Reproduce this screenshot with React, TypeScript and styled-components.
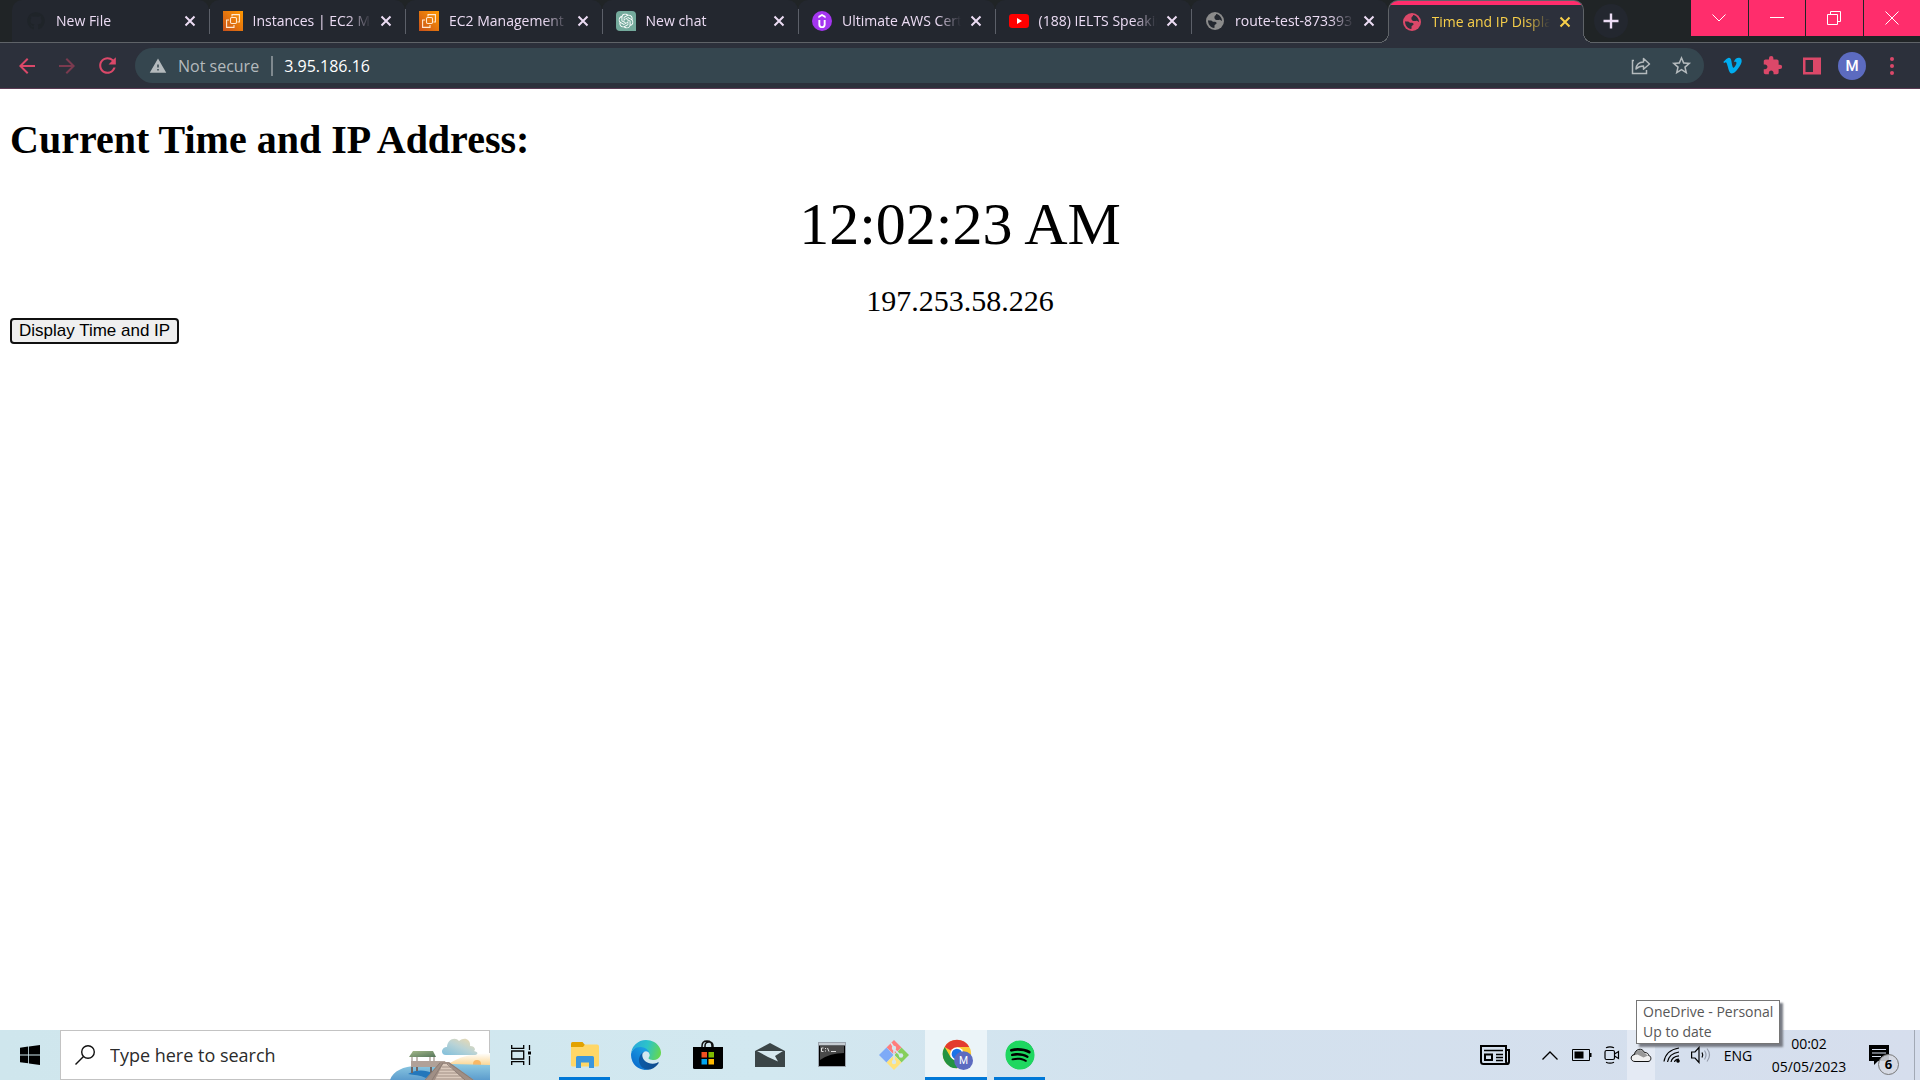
import React from "react";
import styled, { createGlobalStyle, css } from "styled-components";
import { FaGithub, FaSpotify, FaVimeoV } from "react-icons/fa";
import { SiOpenai, SiUdemy } from "react-icons/si";
import {
  MdArrowBack,
  MdArrowForward,
  MdExtension,
  MdRefresh,
  MdStarBorder,
  MdWarning,
} from "react-icons/md";

const c = {
  strip: "#202426",
  tab: "#23272f",
  toolbar: "#2c303b",
  line: "#5f6368",
  omnibox: "#35464f",
  pink: "#ff2d6c",
  accent: "#db4869",
  lavender: "#ecdcf4",
  yellow: "#f8cf4a",
  muted: "#b4babd",
  running: "#0078d7",
};

const uiFont = `"Open Sans", "Noto Sans", sans-serif`;

const GlobalStyle = createGlobalStyle`
  *, *::before, *::after { box-sizing: border-box; }
  body { margin: 0; background: #fff; }
  button, input { font: inherit; color: inherit; }
  svg { display: block; flex: none; }
`;

const Screen = styled.div`
  display: flex;
  flex-direction: column;
  min-height: 100vh;
  font-family: ${uiFont};
`;

const PlainButton = styled.button`
  display: flex;
  align-items: center;
  justify-content: center;
  padding: 0;
  border: 0;
  background: none;
`;

/* ---------- tab strip ---------- */

const TabStrip = styled.header`
  display: flex;
  height: 43px;
  padding-left: 12px;
  background: ${c.strip};
  border-bottom: 1px solid ${c.line};
`;

const TabList = styled.div`
  display: flex;
  flex: 1;
  min-width: 0;
`;

const flare = css`
  content: "";
  position: absolute;
  bottom: 0;
  width: 10px;
  height: 10px;
`;

const Tab = styled.div<{ $active?: boolean }>`
  position: relative;
  display: flex;
  flex: 1 1 0;
  min-width: 0;
  align-items: center;
  padding: 0 9px 0 14px;
  background: ${c.tab};
  border-radius: 10px 10px 0 0;
  color: ${c.lavender};
  font-size: 14px;
  line-height: 20px;

  &:not(:first-child)::before {
    content: "";
    position: absolute;
    left: 0;
    top: 9px;
    width: 1px;
    height: 25px;
    background: #5c6069;
  }

  ${(p) =>
    p.$active &&
    css`
      margin-bottom: -1px;
      padding: 0 8px 0 13px;
      background: linear-gradient(${c.pink} 4px, ${c.toolbar} 4px);
      border: 1px solid ${c.line};
      border-bottom: 0;
      color: ${c.yellow};

      &:not(:first-child)::before {
        ${flare}
        top: auto;
        left: -10px;
        background: radial-gradient(circle at 0 0, ${c.tab} 9px, ${c.line} 9px, ${c.line} 10px, ${c.toolbar} 10px);
      }
      &::after {
        ${flare}
        right: -10px;
        background: radial-gradient(circle at 100% 0, ${c.strip} 9px, ${c.line} 9px, ${c.line} 10px, ${c.toolbar} 10px);
      }
    `}
`;

const Favicon = styled.span`
  display: flex;
  flex: none;
  width: 20px;
  height: 20px;
  align-items: center;
  justify-content: center;
`;

const TabTitle = styled.span`
  flex: 1;
  min-width: 0;
  margin: 0 5px 0 10px;
  overflow: hidden;
  white-space: nowrap;
  mask-image: linear-gradient(to left, transparent, #000 24px);
`;

const TabClose = styled(PlainButton)`
  flex: none;
  width: 20px;
  height: 20px;
`;

const NewTab = styled(PlainButton)`
  width: 34px;
  height: 34px;
  margin: 4px 63px 0 10px;
  border-radius: 50%;
  background: ${c.tab};
`;

const WindowControls = styled.div`
  display: grid;
  grid-template-columns: repeat(4, 1fr);
  gap: 1px;
  width: 229px;
`;

const WindowButton = styled(PlainButton)`
  height: 36px;
  background: ${c.pink};
`;

/* ---------- toolbar ---------- */

const Toolbar = styled.nav`
  display: flex;
  align-items: center;
  height: 46px;
  padding: 0 8px 0 7px;
  background: ${c.toolbar};
  border-bottom: 1px solid #5b3a53;
  color: ${c.accent};
`;

const ToolButton = styled(PlainButton)<{ $dim?: boolean }>`
  width: 40px;
  height: 36px;
  opacity: ${(p) => (p.$dim ? 0.45 : 1)};
`;

const Omnibox = styled.div`
  display: flex;
  flex: 1;
  align-items: center;
  height: 35px;
  margin: 0 8px;
  padding: 0 3px 0 14px;
  border-radius: 18px;
  background: ${c.omnibox};
  color: ${c.muted};
  font-size: 16px;
`;

const Security = styled.label`
  display: flex;
  align-items: center;
  gap: 11px;
  padding-right: 12px;
`;

const Address = styled.input`
  flex: 1;
  min-width: 0;
  height: 20px;
  padding: 0 0 0 11px;
  border: 0;
  border-left: 2px solid #7f898f;
  outline: 0;
  background: none;
  color: #fff;
`;

const Avatar = styled.span`
  display: grid;
  place-items: center;
  width: 28px;
  height: 28px;
  border-radius: 50%;
  background: #5c6bc0;
  color: #fff;
  font: 500 15px Roboto, sans-serif;
`;

/* ---------- page ---------- */

const Page = styled.main`
  flex: 1;
  padding: 28px 10px;
  color: #000;
  font-family: "Liberation Serif", "Times New Roman", serif;
`;

const Heading = styled.h1`
  margin: 0 0 27px;
  font-size: 40px;
  line-height: 46px;
`;

const Time = styled.div`
  margin-bottom: 25px;
  font-size: 60px;
  line-height: 69px;
  text-align: center;
`;

const Ip = styled.div`
  font-size: 30px;
  line-height: 34px;
  text-align: center;
`;

const DisplayButton = styled.button`
  display: block;
  height: 26px;
  padding: 0 7px;
  border: 2px solid #101010;
  border-radius: 4px;
  background: #efefef;
  color: #000;
  font: 17px/20px "Liberation Sans", Arial, sans-serif;
`;

/* ---------- taskbar ---------- */

const Taskbar = styled.footer`
  display: flex;
  height: 50px;
  background: linear-gradient(90deg, #cfe6ed, #d2e8f0 40%, #d3e1ee 62%, #d6deed);
  color: #000;
`;

const StartButton = styled(PlainButton)`
  width: 60px;
`;

const SearchBox = styled.label`
  display: flex;
  align-items: center;
  width: 430px;
  padding-left: 14px;
  border: 1px solid #c3c3c3;
  background: #fff;
  font-size: 18px;
`;

const SearchInput = styled.input`
  flex: 1;
  min-width: 0;
  padding: 0 0 0 15px;
  border: 0;
  outline: 0;
  background: none;
  &::placeholder {
    color: #2b2b2b;
    opacity: 1;
  }
`;

const SearchArt = styled.svg`
  align-self: flex-end;
  margin: 0 -1px -1px 0;
`;

const Apps = styled.div`
  display: flex;
  flex: 1;
`;

const AppButton = styled(PlainButton)<{ $state?: "running" | "focused" }>`
  width: 62px;
  background: ${(p) => (p.$state === "focused" ? "#ebf4f8" : "none")};
  ${(p) =>
    p.$state &&
    css`
      box-shadow: inset 0 -3px ${c.running};
    `}
  ${(p) =>
    p.$state === "running" &&
    css`
      width: 51px;
      margin: 0 5px 0 7px;
    `}
`;

const Tray = styled.div`
  display: flex;
  font-size: 14px;
`;

const TrayButton = styled(PlainButton)<{ $w: number; $hover?: boolean }>`
  position: relative;
  width: ${(p) => p.$w}px;
  background: ${(p) => (p.$hover ? "#e4eaf4" : "none")};
`;

const NoticeButton = styled(PlainButton)`
  position: relative;
  width: 59px;
  padding-right: 11px;
`;

const Clock = styled.div`
  display: flex;
  flex-direction: column;
  justify-content: space-between;
  width: 92px;
  padding: 3px 0 2px;
  text-align: center;
  line-height: 22px;
`;

const Tooltip = styled.div`
  position: absolute;
  left: 9px;
  bottom: 36px;
  padding: 1px 6px;
  border: 1px solid #767676;
  background: #fff;
  box-shadow: 3px 3px 2px #777b84;
  color: #575757;
  font-size: 14px;
  line-height: 20px;
  text-align: left;
  white-space: nowrap;
`;

const Badge = styled.span`
  position: absolute;
  left: 23px;
  top: 24px;
  display: grid;
  place-items: center;
  width: 21px;
  height: 21px;
  border: 1px solid #777;
  border-radius: 50%;
  background: rgba(214, 218, 226, 0.88);
  font-size: 13px;
  font-weight: 700;
  line-height: 13px;
`;

const ShowDesktop = styled(PlainButton)`
  width: 6px;
  border-left: 1px solid #a2a9b5;
`;

/* ---------- drawings ---------- */

const Ec2Icon = () => (
  <svg width="20" height="20" viewBox="0 0 20 20">
    <defs>
      <linearGradient id="ec2" x1="0" y1="1" x2="1" y2="0">
        <stop offset="0" stopColor="#c8511b" />
        <stop offset="1" stopColor="#f90" />
      </linearGradient>
    </defs>
    <rect width="20" height="20" fill="url(#ec2)" />
    <g fill="none" stroke="#ffe9d2" strokeWidth="1.1">
      <rect x="7.5" y="6.5" width="6" height="6" rx="1.2" />
      <path d="M9 5.500V3.600h7.400V11H14.500M6 9H3.600v7.400H11V14" />
    </g>
  </svg>
);

const ChatIcon = () => (
  <svg width="20" height="20" viewBox="0 0 20 20">
    <path d="M4 0h12a4 4 0 0 1 4 4v16H4a4 4 0 0 1-4-4V4a4 4 0 0 1 4-4z" fill="#74aa9c" />
    <SiOpenai x="2.5" y="2.5" size={15} color="#fff" />
  </svg>
);

const UdemyIcon = () => (
  <svg width="20" height="20" viewBox="0 0 20 20">
    <circle cx="10" cy="10" r="10" fill="#a435f0" />
    <SiUdemy x="3" y="3" size={14} color="#fff" />
  </svg>
);

const YoutubeIcon = () => (
  <svg width="20" height="20" viewBox="0 0 20 20">
    <rect y="3" width="20" height="14" rx="3.2" fill="#f00" />
    <path d="M8 7v6l5-3z" fill="#fff" />
  </svg>
);

const GlobeIcon = ({ color, land }: { color: string; land: string }) => (
  <svg width="18" height="18" viewBox="0 0 18 18">
    <circle cx="9" cy="9" r="9" fill={color} />
    <path
      d="M10 2C13.500 2.500 16 5.500 16 9c-1-.5-1.300-1.500-2.800-1.300-1.700.3-3.200-.2-3-1.800.1-1 .8-1.300-.2-2z"
      fill={land}
    />
    <path d="M2 8.200c1.500.8 3-.3 4.200 1 1 1.200 3.600-.2 4.300 1.600.5 1.500-1.700 1.500-2 2.800-.2 1 .6 1.600-.3 2.400C4.500 15.500 2 12.300 2 8.200z" fill={land} />
    <path d="M11 2.500C8.500 3 8 5 8.600 6.500c.7 1.700 2.400 1.700 4.400 1.500V4z" fill={land} />
  </svg>
);

const CloseGlyph = () => (
  <svg width="12" height="12" viewBox="0 0 12 12" stroke="currentColor" strokeWidth="2">
    <path d="M1.500 1.500l9 9M10.500 1.500l-9 9" />
  </svg>
);

const ShareIcon = () => (
  <svg width="20" height="20" viewBox="0 0 20 20" fill="none" stroke="currentColor" strokeWidth="1.500">
    <path d="M3 4.500H1.500v13h14V14" />
    <path d="M5 13c.5-4.500 3-7 7.500-7V2.500L18.500 8 12.500 13.200V10C9 10 7 11 5 13z" strokeLinejoin="round" />
  </svg>
);

const PanelIcon = () => (
  <svg width="20" height="20" viewBox="0 0 20 20" fill="currentColor">
    <path fillRule="evenodd" d="M1 1.500h18v17H1zM3.500 4v12h7.500V4z" />
  </svg>
);

const WindowsLogo = () => (
  <svg width="20" height="20" viewBox="0 0 20 20">
    <path d="M0 2.800l8.200-1.200v7.900H0zM9 1.500L20 0v9.500H9zM0 10.400h8.200v7.900L0 17.200zM9 10.400h11V20L9 18.500z" />
  </svg>
);

const PierArt = () => (
  <SearchArt width="100" height="43" viewBox="0 0 100 43" aria-hidden="true">
    <defs>
      <linearGradient id="cloud" x1="0" y1="1" x2="1" y2="0">
        <stop offset="0" stopColor="#7fbfdc" />
        <stop offset="0.5" stopColor="#b9d3d6" />
        <stop offset="1" stopColor="#f5dba9" />
      </linearGradient>
      <linearGradient id="dusk" x1="0" y1="0" x2="0" y2="1">
        <stop offset="0" stopColor="#fff" />
        <stop offset="1" stopColor="#fbd48c" />
      </linearGradient>
      <linearGradient id="sea" x1="0" y1="0" x2="0" y2="1">
        <stop offset="0" stopColor="#8ecbe3" />
        <stop offset="1" stopColor="#5c9ccd" />
      </linearGradient>
      <linearGradient id="roof" x1="0" y1="0" x2="1" y2="1">
        <stop offset="0" stopColor="#a5b98a" />
        <stop offset="1" stopColor="#55755a" />
      </linearGradient>
    </defs>
    <path d="M56 29C70 18 84 17 100 16v12z" fill="url(#dusk)" />
    <circle cx="87" cy="27" r="4" fill="#f8b866" />
    <path d="M0 43C3 34 14 29 26 29l36-2 38 1v15z" fill="url(#sea)" />
    <path d="M18 37c8-5 18-4 24-1l-6 5c-6-3-12-3-18-4z" fill="#2377bb" />
    <path d="M56 18c-6 0-5-8 1-8 0-7 8-11 12-6 6-5 12-1 11 5 5 0 6 4 4 5 5 1 4 4 0 4z" fill="url(#cloud)" />
    <path d="M23 14h20l3 6H19z" fill="url(#roof)" />
    <path d="M22 20v5M27 20v5M40 20v5M44 20v5" stroke="#9d9187" strokeWidth="1.200" />
    <path d="M21 24h34l3 6H21z" fill="#b0a198" />
    <path d="M22 30v6M27 30v4M41 30v6" stroke="#6d6665" strokeWidth="2" />
    <path d="M50 25h9L84 43H35z" fill="#a08f85" />
    <path d="M53 27h5L74 43H45z" fill="#dac9bc" />
    <path d="M52 30h9M50 33h14M48 36h19M47 39h23M45 42h28" stroke="#a39186" />
    <path d="M50 26L35 43M53 26L42 43M59 26l24 17M57 27l18 16" stroke="#8a7a73" strokeWidth="0.900" fill="none" />
  </SearchArt>
);

const TaskViewIcon = () => (
  <svg width="20" height="20" viewBox="0 0 20 20" fill="none" stroke="#000" strokeWidth="1.300">
    <path d="M.7 0v3.300h12V0M.7 20v-3.300h12V20M.7 6h12v8H.7zM18.500 0v5M18.500 11v9" />
    <path d="M17 6.500h3v3h-3z" fill="#000" stroke="none" />
  </svg>
);

const ExplorerIcon = () => (
  <svg width="28" height="26" viewBox="0 0 28 26">
    <path d="M0 1.500Q0 0 1.500 0h10L14 3v4H0z" fill="#e2a200" />
    <path d="M0 5h12l2-2.500h12q2 0 2 2V23q0 1.500-1.500 1.500h-25Q0 24.500 0 23z" fill="#ffd767" />
    <path d="M5 26V15.500q0-1.500 1.500-1.500h15q1.500 0 1.500 1.500V26h-5v-5.500h-8V26z" fill="#3a96dd" />
  </svg>
);

const EdgeIcon = () => (
  <svg width="30" height="30" viewBox="0 0 256 256">
    <defs>
      <linearGradient id="edgeA" x1="0.2" y1="0.5" x2="1" y2="0.5">
        <stop offset="0" stopColor="#0c59a4" />
        <stop offset="1" stopColor="#114a8b" />
      </linearGradient>
      <linearGradient id="edgeB" x1="0.8" y1="0.2" x2="0.3" y2="0.9">
        <stop offset="0" stopColor="#1b9de2" />
        <stop offset="1" stopColor="#0b6fce" />
      </linearGradient>
      <linearGradient id="edgeC" x1="0" y1="0.4" x2="1" y2="0.6">
        <stop offset="0" stopColor="#2aa8dc" />
        <stop offset="0.5" stopColor="#2cc3c9" />
        <stop offset="1" stopColor="#66d84e" />
      </linearGradient>
    </defs>
    <path fill="url(#edgeA)" d="M231 190.500c-3.400 1.800-6.900 3.400-10.500 4.700a101.700 101.700 0 0 1-35.900 6.400c-47.300 0-88.500-32.500-88.500-74.300a31.500 31.500 0 0 1 16.400-27.300c-42.800 1.800-53.800 46.400-53.800 72.500 0 74 68.100 81.400 82.800 81.400 7.900 0 19.800-2.300 27-4.600l1.300-.4a128.300 128.300 0 0 0 66.600-52.800 4 4 0 0 0-5.400-5.600z" />
    <path fill="url(#edgeB)" d="M105.700 241.400a79.200 79.200 0 0 1-22.700-21.300 80.700 80.700 0 0 1 29.500-120c3.200-1.500 8.500-4.100 15.600-4a32.400 32.400 0 0 1 25.700 13 31.900 31.900 0 0 1 6.300 18.700c0-.2 24.500-79.600-80-79.600-43.900 0-80 41.700-80 78.200a130.200 130.200 0 0 0 12.100 56 128 128 0 0 0 156.400 67 75.500 75.500 0 0 1-62.800-8z" />
    <path fill="url(#edgeC)" d="M152.300 148.900c-.8 1-3.300 2.500-3.300 5.700 0 2.600 1.700 5.100 4.700 7.200 14.400 10 41.500 8.700 41.600 8.700 10.700 0 21.100-2.900 30.300-8.300a61.400 61.400 0 0 0 30.400-52.900c.3-22.400-8-37.300-11.300-43.900C223.500 23.900 177.700 0 128 0A128 128 0 0 0 0 126.200c.5-36.500 36.800-66 80-66 3.500 0 23.500.3 42 10 16.300 8.600 24.900 19 30.800 29.200 6.200 10.700 7.300 24.100 7.300 29.500 0 5.300-2.700 13.300-7.800 20z" />
  </svg>
);

const StoreIcon = () => (
  <svg width="30" height="30" viewBox="0 0 30 30">
    <path d="M9 8V6q0-5 5-5t5 5v2M12 8V6q0-4 4-4t4 4v2" fill="none" stroke="#111" strokeWidth="1.500" />
    <path d="M0 7h30v20.500q0 1.500-1.500 1.500h-27Q0 29 0 27.500z" />
    <path d="M8.500 12H14v5.500H8.500z" fill="#f25022" />
    <path d="M15.500 12H21v5.500h-5.500z" fill="#7fba00" />
    <path d="M8.500 19H14v5.500H8.500z" fill="#00a4ef" />
    <path d="M15.500 19H21v5.500h-5.500z" fill="#ffb900" />
  </svg>
);

const MailIcon = () => (
  <svg width="30" height="26" viewBox="0 0 30 26">
    <path d="M0 9L15 1l15 8v16H0z" fill="#3b4547" />
    <path d="M2 9h26l-8 5 3 5.500L13 15z" fill="#d6e8ef" />
  </svg>
);

const TerminalIcon = () => (
  <svg width="28" height="26" viewBox="0 0 28 26">
    <rect x="0.500" y="0.500" width="27" height="24" fill="#000" stroke="#9ba4ae" />
    <path d="M1 1h26v2.500H1z" fill="#c5ccd2" />
    <path d="M2 4h24v7Q12 11 2 18z" fill="#4a4a4a" />
    <path d="M3.500 6h2M3.500 6v3.500h2M7.500 6v1M7.500 8.500v1M9.500 6l1.500 3.500M13 9.500h5" stroke="#ddd" fill="none" />
  </svg>
);

const GitIcon = () => (
  <svg width="30" height="30" viewBox="0 0 30 30">
    <path d="M15 0l7.500 7.500L15 14.500l-7.500-7z" fill="#ff7d7d" />
    <path d="M7.500 7.500L14.500 15l-7 7.500L0 15z" fill="#7eaaf7" />
    <path d="M22.500 7.500L30 15l-7.500 7.500-7-7.500z" fill="#86cf5c" />
    <path d="M15 15.500l7.500 7L15 30l-7.500-7.500z" fill="#ffe27a" />
    <path d="M12 3l3 4.500V22M15 9l7 7" fill="none" stroke="#d5e7ef" strokeWidth="1.600" />
    <g fill="#d5e7ef">
      <circle cx="15" cy="8" r="2.200" />
      <circle cx="15" cy="22" r="2.200" />
      <circle cx="22" cy="15.500" r="2.200" />
    </g>
  </svg>
);

const ChromeIcon = () => (
  <svg width="34" height="32" viewBox="-4 0 36 32">
    <circle cx="15" cy="15" r="15" fill="#fcc934" />
    <path d="M15 15L2 7.500A15 15 0 0 1 28 7.500H15z" fill="#e33b2e" />
    <path d="M8.500 18.700L2 7.500A15 15 0 0 0 15 30l6.500-11.300z" fill="#229342" />
    <circle cx="15" cy="15" r="7.200" fill="#fff" />
    <circle cx="15" cy="15" r="5.600" fill="#1a73e8" />
    <circle cx="22" cy="22" r="10" fill="#5c6bc0" />
    <text x="22" y="26" fill="#fff" fontFamily="Roboto, sans-serif" fontSize="11" textAnchor="middle">
      M
    </text>
  </svg>
);

const SpotifyIcon = () => (
  <svg width="30" height="30" viewBox="0 0 30 30">
    <circle cx="15" cy="15" r="14" fill="#000" />
    <FaSpotify size={30} color="#1ed760" />
  </svg>
);

const NewsIcon = () => (
  <svg width="30" height="20" viewBox="0 0 30 20" fill="none" stroke="#000" strokeWidth="2">
    <path d="M1 1h25v15.500q0 2.500 2.500 2.500H3.500Q1 19 1 16.500zM26 5h3v11.500q0 2.500-2 2.500" />
    <path d="M4 5.500h19M16 9.500h7M16 12.500h7M16 15.500h7" strokeWidth="1.500" />
    <path d="M5 9.500h7v5.500H5z" />
  </svg>
);

const BatteryIcon = () => (
  <svg width="20" height="12" viewBox="0 0 20 12">
    <path d="M.5.500h17v11H.5z" fill="none" stroke="#000" />
    <path d="M2.500 2.500h9v7h-9zM18 4h1.500v4H18z" />
  </svg>
);

const MeetIcon = () => (
  <svg width="16" height="18" viewBox="0 0 16 18" fill="none" stroke="#000" strokeWidth="1.200">
    <rect x="1" y="4.500" width="9.500" height="9" rx="1.500" />
    <path d="M10.500 8l4-2.500v7l-4-2.500M2 1.800q4-2 8 0M2 16.200q4 2 8 0" />
  </svg>
);

const CloudIcon = () => (
  <svg width="22" height="16" viewBox="0 0 22 16">
    <path d="M5 14.500C0 14.500 0 8 4.500 7.500 5 2 12 0 14.500 5.500c3 0 4 1.500 4.200 3 3 .5 3 6-.7 6z" fill="#f1f1f1" />
    <path d="M3 8.500C5 2.500 12 1 14.300 6l3.700 2.500-4.500 2-6-3z" fill="#999" />
    <path d="M5 14.500C0 14.500 0 8 4.500 7.500 5 2 12 0 14.500 5.500c3 0 4 1.500 4.200 3 3 .5 3 6-.7 6z" fill="none" stroke="#111" />
  </svg>
);

const WifiIcon = () => (
  <svg width="18" height="18" viewBox="0 0 18 18" fill="none" stroke="#000" strokeWidth="1.200">
    <path d="M1 15.500Q3 4 16 2M4.500 16Q6 7.500 16 6M8 16q1-5.500 8-6.200" />
    <path d="M11.500 16q.5-2.500 4.500-2.800" />
    <circle cx="15" cy="15" r="1.200" fill="#000" />
  </svg>
);

const VolumeIcon = () => (
  <svg width="20" height="18" viewBox="0 0 20 18" fill="none" stroke="#000" strokeWidth="1.200">
    <path d="M.6 6h3.400l4-4.500v15L4 12H.6z" />
    <path d="M11 6.500q1.500 2.500 0 5" />
    <path d="M13.500 4.500q3 4.500 0 9M16 2.500q5 6.500 0 13" stroke="#959cab" />
  </svg>
);

const NoticeIcon = () => (
  <svg width="20" height="20" viewBox="0 0 20 20">
    <path d="M0 0h20v16H9l-4 4v-4H0z" />
    <path d="M3 4.500h14M3 8h14M3 11.500h9" stroke="#d6deed" strokeWidth="1.200" />
  </svg>
);

const tabs = [
  { title: "New File", icon: <FaGithub size={18} color="#1f2429" /> },
  { title: "Instances | EC2 Management Console", icon: <Ec2Icon /> },
  { title: "EC2 Management Console", icon: <Ec2Icon /> },
  { title: "New chat", icon: <ChatIcon /> },
  { title: "Ultimate AWS Certified", icon: <UdemyIcon /> },
  { title: "(188) IELTS Speaking", icon: <YoutubeIcon /> },
  { title: "route-test-873393", icon: <GlobeIcon color="#8b8b8b" land={c.tab} /> },
  { title: "Time and IP Display", icon: <GlobeIcon color={c.accent} land={c.toolbar} />, active: true },
];

export default function App() {
  return (
    <Screen>
      <GlobalStyle />
      <TabStrip>
        <TabList role="tablist">
          {tabs.map((t) => (
            <Tab key={t.title} role="tab" aria-selected={!!t.active} $active={t.active}>
              <Favicon>{t.icon}</Favicon>
              <TabTitle>{t.title}</TabTitle>
              <TabClose aria-label="Close tab">
                <CloseGlyph />
              </TabClose>
            </Tab>
          ))}
        </TabList>
        <NewTab aria-label="New tab">
          <svg width="16" height="16" viewBox="0 0 16 16" stroke={c.lavender} strokeWidth="2.400">
            <path d="M8 .5v15M.5 8h15" />
          </svg>
        </NewTab>
        <WindowControls>
          <WindowButton aria-label="Search tabs">
            <svg width="14" height="8" viewBox="0 0 14 8" fill="none" stroke="#fff">
              <path d="M.5.500L7 7l6.500-6.500" />
            </svg>
          </WindowButton>
          <WindowButton aria-label="Minimize">
            <svg width="14" height="2" viewBox="0 0 14 2">
              <path d="M0 0h14v1H0z" fill="#fff" />
            </svg>
          </WindowButton>
          <WindowButton aria-label="Restore">
            <svg width="14" height="14" viewBox="0 0 14 14" fill="none" stroke="#fff">
              <path d="M.5 3.500h10v10H.5zM3.500 3.500v-3h10v10h-3" />
            </svg>
          </WindowButton>
          <WindowButton aria-label="Close">
            <svg width="14" height="14" viewBox="0 0 14 14" stroke="#fff">
              <path d="M.5.500l13 13M13.500.500l-13 13" />
            </svg>
          </WindowButton>
        </WindowControls>
      </TabStrip>

      <Toolbar>
        <ToolButton aria-label="Back">
          <MdArrowBack size={24} />
        </ToolButton>
        <ToolButton aria-label="Forward" $dim>
          <MdArrowForward size={24} />
        </ToolButton>
        <ToolButton aria-label="Reload">
          <MdRefresh size={25} />
        </ToolButton>
        <Omnibox>
          <Security htmlFor="address">
            <MdWarning size={18} />
            Not secure
          </Security>
          <Address id="address" defaultValue="3.95.186.16" />
          <ToolButton aria-label="Share">
            <ShareIcon />
          </ToolButton>
          <ToolButton aria-label="Bookmark">
            <MdStarBorder size={23} />
          </ToolButton>
        </Omnibox>
        <ToolButton aria-label="Vimeo">
          <FaVimeoV size={21} color="#00adef" />
        </ToolButton>
        <ToolButton aria-label="Extensions">
          <MdExtension size={21} />
        </ToolButton>
        <ToolButton aria-label="Side panel">
          <PanelIcon />
        </ToolButton>
        <ToolButton aria-label="Profile">
          <Avatar>M</Avatar>
        </ToolButton>
        <ToolButton aria-label="Menu">
          <svg width="4" height="18" viewBox="0 0 4 18" fill="currentColor">
            <circle cx="2" cy="2" r="2" />
            <circle cx="2" cy="9" r="2" />
            <circle cx="2" cy="16" r="2" />
          </svg>
        </ToolButton>
      </Toolbar>

      <Page>
        <Heading>Current Time and IP Address:</Heading>
        <Time>12:02:23 AM</Time>
        <Ip>197.253.58.226</Ip>
        <DisplayButton>Display Time and IP</DisplayButton>
      </Page>

      <Taskbar>
        <StartButton aria-label="Start">
          <WindowsLogo />
        </StartButton>
        <SearchBox>
          <svg width="20" height="20" viewBox="0 0 20 20" fill="none" stroke="#111" strokeWidth="1.400">
            <circle cx="13" cy="7" r="6.300" />
            <path d="M8.500 11.500l-8 8" />
          </svg>
          <SearchInput placeholder="Type here to search" aria-label="Search" />
          <PierArt />
        </SearchBox>
        <Apps>
          <AppButton aria-label="Task view">
            <TaskViewIcon />
          </AppButton>
          <AppButton aria-label="File Explorer" $state="running">
            <ExplorerIcon />
          </AppButton>
          <AppButton aria-label="Edge">
            <EdgeIcon />
          </AppButton>
          <AppButton aria-label="Store">
            <StoreIcon />
          </AppButton>
          <AppButton aria-label="Mail">
            <MailIcon />
          </AppButton>
          <AppButton aria-label="Terminal">
            <TerminalIcon />
          </AppButton>
          <AppButton aria-label="Git">
            <GitIcon />
          </AppButton>
          <AppButton aria-label="Chrome" $state="focused">
            <ChromeIcon />
          </AppButton>
          <AppButton aria-label="Spotify" $state="running">
            <SpotifyIcon />
          </AppButton>
        </Apps>
        <Tray>
          <TrayButton aria-label="News" $w={72}>
            <NewsIcon />
          </TrayButton>
          <TrayButton aria-label="Show hidden icons" $w={37}>
            <svg width="16" height="9" viewBox="0 0 16 9" fill="none" stroke="#000" strokeWidth="1.300">
              <path d="M.5 8.500L8 1l7.500 7.500" />
            </svg>
          </TrayButton>
          <TrayButton aria-label="Battery" $w={28}>
            <BatteryIcon />
          </TrayButton>
          <TrayButton aria-label="Meet Now" $w={31}>
            <MeetIcon />
          </TrayButton>
          <TrayButton aria-label="OneDrive" $w={28} $hover>
            <CloudIcon />
            <Tooltip role="tooltip">
              OneDrive - Personal
              <br />
              Up to date
            </Tooltip>
          </TrayButton>
          <TrayButton aria-label="Network" $w={34}>
            <WifiIcon />
          </TrayButton>
          <TrayButton aria-label="Volume" $w={24}>
            <VolumeIcon />
          </TrayButton>
          <TrayButton $w={50}>ENG</TrayButton>
          <Clock>
            <span>00:02</span>
            <span>05/05/2023</span>
          </Clock>
          <NoticeButton aria-label="Notifications">
            <NoticeIcon />
            <Badge>6</Badge>
          </NoticeButton>
          <ShowDesktop aria-label="Show desktop" />
        </Tray>
      </Taskbar>
    </Screen>
  );
}
